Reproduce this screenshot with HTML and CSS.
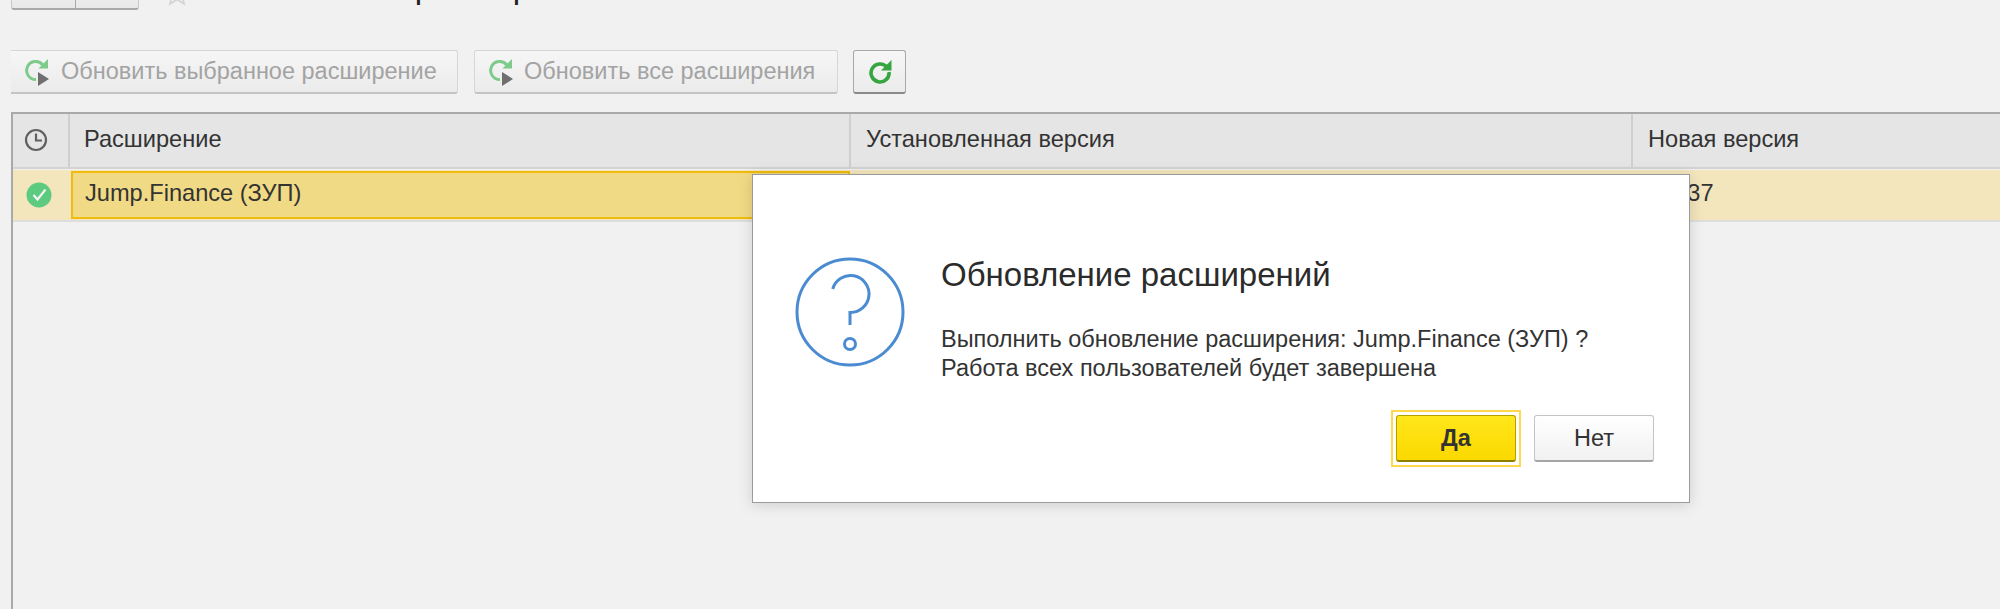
FILE: index.html
```html
<!DOCTYPE html>
<html lang="ru">
<head>
<meta charset="utf-8">
<title>Обновление расширений</title>
<link rel="stylesheet" href="styles.css">
</head>
<body>
<div class="page">
  <header class="topbar">
    <div class="navgroup"><span class="navbtn"></span><span class="navbtn navbtn-right"></span></div>
    <svg class="star" viewBox="0 0 24 24" width="26" height="26"><path d="M12 2l3 7 7.500.7-5.700 5 1.700 7.300-6.500-3.900-6.500 3.900 1.700-7.300-5.700-5 7.500-.7z" fill="none" stroke="#d4d4d4" stroke-width="1.600"/></svg>
    <h1 class="pagetitle">Обновление расширений</h1>
  </header>

  <div class="toolbar">
    <button class="btn btn-wide btn-first" disabled>
      <svg class="ico" viewBox="0 0 26 28" width="26" height="28"><path d="M18.800 7A9 9 0 1 0 12 21.500" fill="none" stroke="#7ccb8b" stroke-width="3"/><path d="M14.500 10.500H24V1z" fill="#7ccb8b"/><path d="M14 14l11 7-11 7z" fill="#6f6f6f"/></svg>
      Обновить выбранное расширение
    </button>
    <button class="btn btn-wide btn-second" disabled>
      <svg class="ico" viewBox="0 0 26 28" width="26" height="28"><path d="M18.800 7A9 9 0 1 0 12 21.500" fill="none" stroke="#7ccb8b" stroke-width="3"/><path d="M14.500 10.500H24V1z" fill="#7ccb8b"/><path d="M14 14l11 7-11 7z" fill="#6f6f6f"/></svg>
      Обновить все расширения
    </button>
    <button class="btn btn-icon">
      <svg viewBox="0 0 24 24" width="24" height="24"><path d="M18.800 7A9 9 0 1 0 21 12" fill="none" stroke="#35a53f" stroke-width="3.600"/><path d="M13 10.500h10.500V0z" fill="#35a53f"/></svg>
    </button>
  </div>

  <section class="table">
    <div class="thead">
      <div class="th th-status">
        <svg viewBox="0 0 24 24" width="24" height="24"><circle cx="12" cy="12" r="10" fill="none" stroke="#606060" stroke-width="2.200"/><path d="M12 5.500V12.500H18" fill="none" stroke="#606060" stroke-width="2.200"/></svg>
      </div>
      <div class="th th-name">Расширение</div>
      <div class="th th-installed">Установленная версия</div>
      <div class="th th-new">Новая версия</div>
    </div>
    <div class="row">
      <div class="td td-status">
        <svg viewBox="0 0 26 26" width="26" height="26"><circle cx="13" cy="13" r="12.500" fill="#5ccb80"/><path d="M7.500 13l4 4.500 8-10" fill="none" stroke="#f3f3f3" stroke-width="2.200"/></svg>
      </div>
      <div class="td td-name">Jump.Finance (ЗУП)</div>
      <div class="td td-installed"></div>
      <div class="td td-new">1.1.37</div>
    </div>
  </section>
</div>

<div class="dialog">
  <svg class="dialog-icon" viewBox="0 0 110 110" width="110" height="110"><circle cx="55" cy="55" r="53" fill="none" stroke="#4a8bd2" stroke-width="3"/><path d="M37.700 32A18.500 18.500 0 1 1 55 55.500V68" fill="none" stroke="#4a8bd2" stroke-width="3"/><circle cx="55" cy="87" r="5.500" fill="none" stroke="#4a8bd2" stroke-width="3"/></svg>
  <div class="dialog-main">
    <h2 class="dialog-title">Обновление расширений</h2>
    <p class="dialog-text">Выполнить обновление расширения: Jump.Finance (ЗУП) ?<br>Работа всех пользователей будет завершена</p>
    <div class="dialog-actions">
      <span class="focus-ring"><button class="dbtn dbtn-yes">Да</button></span>
      <button class="dbtn dbtn-no">Нет</button>
    </div>
  </div>
</div>

<div class="watermarks" aria-hidden="true">
  <div class="wm-row wm-even"><span>m.e.khomyakova</span><span>m.e.khomyakova</span><span>m.e.khomyakova</span><span>m.e.khomyakova</span></div>
  <div class="wm-row"><span>m.e.khomyakova</span><span>m.e.khomyakova</span><span>m.e.khomyakova</span><span>m.e.khomyakova</span><span>m.e.khomyakova</span></div>
  <div class="wm-row wm-even"><span>m.e.khomyakova</span><span>m.e.khomyakova</span><span>m.e.khomyakova</span><span>m.e.khomyakova</span></div>
  <div class="wm-row"><span>m.e.khomyakova</span><span>m.e.khomyakova</span><span>m.e.khomyakova</span><span>m.e.khomyakova</span><span>m.e.khomyakova</span></div>
  <div class="wm-row wm-even"><span>m.e.khomyakova</span><span>m.e.khomyakova</span><span>m.e.khomyakova</span><span>m.e.khomyakova</span></div>
  <div class="wm-row"><span>m.e.khomyakova</span><span>m.e.khomyakova</span><span>m.e.khomyakova</span><span>m.e.khomyakova</span><span>m.e.khomyakova</span></div>
  <div class="wm-row wm-even"><span>m.e.khomyakova</span><span>m.e.khomyakova</span><span>m.e.khomyakova</span><span>m.e.khomyakova</span></div>
  <div class="wm-row"><span>m.e.khomyakova</span><span>m.e.khomyakova</span><span>m.e.khomyakova</span><span>m.e.khomyakova</span><span>m.e.khomyakova</span></div>
</div>
</body>
</html>
```

FILE: styles.css
```css
* { box-sizing: border-box; }
html, body {
  margin: 0;
  width: 2000px;
  height: 609px;
  overflow: hidden;
  background: #f1f1f1;
  font-family: "Liberation Sans", Arial, sans-serif;
  color: #333;
}
body { position: relative; }

.page {
  display: flex;
  flex-direction: column;
  height: 609px;
  padding-left: 11px;
}

/* top bar, cropped by the top edge of the window */
.topbar {
  display: flex;
  align-items: flex-end;
  height: 40px;
  margin-top: -30px;
  flex: none;
}
.navgroup {
  display: flex;
  width: 128px;
  height: 40px;
  flex: none;
  border: 1px solid #c9c9c9;
  border-bottom: 2px solid #a9a9a9;
  border-radius: 0 0 3px 3px;
  background: linear-gradient(#f3f3f3, #e9e9e9);
}
.navbtn { flex: 0 0 63px; }
.navbtn-right { flex: 1; border-left: 1px solid #a9a9a9; }
.star { margin: 0 0 4px 25px; flex: none; }
.pagetitle {
  margin: 0 0 4px 25px;
  font-size: 33px;
  line-height: 38px;
  font-weight: normal;
  color: #222;
  white-space: nowrap;
}

/* toolbar */
.toolbar {
  display: flex;
  gap: 16px;
  margin-top: 40px;
  flex: none;
}
.btn {
  display: flex;
  align-items: center;
  height: 44px;
  padding: 0;
  border: 1px solid #d6d6d6;
  border-bottom: 2px solid #c4c4c4;
  border-radius: 3px;
  background: linear-gradient(#f6f6f6, #ebebeb);
  font: 23.500px "Liberation Sans", Arial, sans-serif;
  color: #a3a3a3;
  white-space: nowrap;
}
.ico { margin: 0 10px 0 13px; flex: none; }
.btn-first { width: 447px; border-left: 0; border-radius: 0 3px 3px 0; }
.btn-first .ico { margin-right: 11px; }
.btn-second { width: 364px; }
.btn-icon {
  width: 53px;
  margin-left: -1px;
  justify-content: center;
  border-color: #a8a8a8;
  border-bottom-color: #8a8a8a;
}

/* table */
.table {
  flex: 1;
  margin-top: 18px;
  border-left: 2px solid #a9a9a9;
  border-top: 2px solid #a9a9a9;
}
.thead, .row { display: grid; grid-template-columns: 57px 781px 782px 1fr; }
.thead {
  height: 55px;
  background: #e5e5e5;
  border-bottom: 2px solid #d3d3d3;
}
.th {
  display: flex;
  align-items: center;
  padding-left: 15px;
  padding-bottom: 2px;
  font-size: 23.600px;
  color: #333;
  border-right: 2px solid #cfcfcf;
}
.th-status { justify-content: center; padding-left: 0; padding-right: 10px; }
.th-name { padding-left: 14px; }
.th-new { border-right: 0; }
.row {
  height: 52px;
  margin-top: 1px;
  background: #f3e6bd;
  border-bottom: 2px solid #dedede;
}
.td {
  display: flex;
  align-items: center;
  font-size: 23.600px;
  color: #333;
}
.td-status { justify-content: center; padding-right: 6px; }
.td-name {
  margin: 1px;
  padding-left: 12px;
  padding-bottom: 3px;
  background: #f0da85;
  border: 2px solid #f0bc0d;
}
.td-new { padding-left: 15px; padding-bottom: 4px; }

/* dialog */
.dialog {
  position: absolute;
  left: 752px;
  top: 174px;
  width: 938px;
  height: 329px;
  display: flex;
  background: #fff;
  border: 1px solid #9b9b9b;
  box-shadow: 0 2px 14px rgba(0, 0, 0, .14);
}
.dialog-icon { margin: 82px 0 0 42px; flex: none; }
.dialog-main {
  flex: 1;
  padding: 81px 35px 0 36px;
  display: flex;
  flex-direction: column;
}
.dialog-title {
  margin: 0;
  font-size: 33px;
  line-height: 38px;
  font-weight: normal;
  color: #2b2b2b;
}
.dialog-text {
  margin: 31px 0 0;
  font-size: 23.500px;
  line-height: 29px;
  color: #333;
}
.dialog-actions {
  display: flex;
  align-items: center;
  justify-content: flex-end;
  gap: 13px;
  margin-top: 27px;
}
.focus-ring {
  display: block;
  padding: 3px 3px;
  border: 2px solid #ffd84d;
}
.dbtn {
  display: block;
  width: 120px;
  height: 47px;
  padding: 0;
  border-radius: 3px;
  font: 23.500px "Liberation Sans", Arial, sans-serif;
  color: #333;
}
.dbtn-yes {
  font-weight: bold;
  background: linear-gradient(#ffe71a, #fbd800);
  border: 1px solid #b3a000;
  border-bottom: 2px solid #8f7f00;
}
.dbtn-no {
  background: linear-gradient(#ffffff, #f1f1f1);
  border: 1px solid #c4c4c4;
  border-bottom: 2px solid #a5a5a5;
}

/* faint user watermark over the whole window */
.watermarks {
  position: absolute;
  left: 0;
  top: -28px;
  width: 2000px;
  height: 637px;
  overflow: hidden;
  pointer-events: none;
}
.wm-row {
  display: flex;
  height: 76.700px;
  align-items: center;
  gap: 265px;
  padding-left: 63px;
  font-size: 22.200px;
  color: rgba(0, 0, 0, .018);
  white-space: nowrap;
}
.wm-row span { flex: 0 0 168.500px; }
.wm-even { padding-left: 280px; }
```
